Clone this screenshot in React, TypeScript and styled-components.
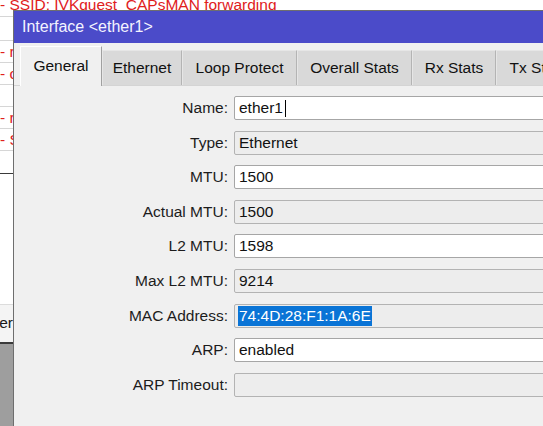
import React from "react";
import styled, { createGlobalStyle } from "styled-components";

const GlobalStyle = createGlobalStyle`
  html, body {
    margin: 0;
    padding: 0;
    overflow: hidden;
    background: #ffffff;
    font-family: "Liberation Sans", Arial, sans-serif;
  }
`;

const Desktop = styled.div`
  position: relative;
  width: 543px;
  height: 426px;
  overflow: hidden;
  background: #ffffff;
`;

const BackList = styled.div`
  display: flex;
  flex-direction: column;
  width: 100%;
  height: 100%;
`;

const BackRow = styled.div<{ h: number; top?: number; line?: string }>`
  flex: none;
  height: ${(p) => p.h}px;
  line-height: ${(p) => p.h}px;
  margin-top: ${(p) => p.top ?? 0}px;
  border-bottom: 1px solid ${(p) => p.line ?? "#d6d6d6"};
  color: #e0201c;
  font-size: 15.5px;
  white-space: nowrap;
  overflow: hidden;
`;

const BackButton = styled.div`
  flex: none;
  width: 13px;
  height: 37px;
  line-height: 36px;
  font-size: 15.5px;
  color: #1a1a1a;
  background: #f4f4f4;
  border-top: 1px solid #dcdcdc;
  white-space: nowrap;
  overflow: hidden;
  display: flex;
  justify-content: flex-end;
`;

const BackEdge = styled.div`
  flex: none;
  height: 2px;
  background: #3a3a3a;
`;

const BackShade = styled.div`
  flex: 1;
  background: #9e9e9e;
`;

const BackBlank = styled.div<{ h: number }>`
  flex: none;
  height: ${(p) => p.h}px;
`;

const Window = styled.div`
  position: absolute;
  left: 13px;
  top: 10px;
  width: 640px;
  height: 440px;
  border: 1px solid #6e6e6e;
  background: #f0f0f0;
  display: flex;
  flex-direction: column;
`;

const TitleBar = styled.div`
  height: 32px;
  background: #4b4bc9;
  color: #f4f4ff;
  font-size: 16px;
  display: flex;
  align-items: center;
  padding-left: 8px;
`;

const TabStrip = styled.div`
  display: flex;
  align-items: flex-end;
  height: 42px;
  padding-left: 6px;
  border-bottom: 1px solid #d4d4d4;
`;

const Tab = styled.div<{ w: number; active?: boolean }>`
  flex: none;
  width: ${(p) => p.w}px;
  box-sizing: border-box;
  height: ${(p) => (p.active ? 40 : 35)}px;
  margin-bottom: ${(p) => (p.active ? -1 : 0)}px;
  background: ${(p) => (p.active ? "#f0f0f0" : "#d9d9d9")};
  border-top: 1px solid ${(p) => (p.active ? "#ffffff" : "#e6e6e6")};
  border-left: 1px solid ${(p) => (p.active ? "#ffffff" : "#e6e6e6")};
  border-right: 1px solid ${(p) => (p.active ? "#a0a0a0" : "#b4b4b4")};
  display: flex;
  align-items: center;
  justify-content: center;
  font-size: 15.5px;
  color: #111;
  padding-bottom: ${(p) => (p.active ? 2 : 0)}px;
`;

const Panel = styled.div`
  flex: 1;
  padding: 10px 0 0 0;
`;

const Form = styled.div`
  display: grid;
  grid-template-columns: 214px 1fr;
  grid-auto-rows: 24px;
  column-gap: 6px;
  row-gap: 10.6px;
`;

const Label = styled.div`
  text-align: right;
  font-size: 15.5px;
  line-height: 24px;
  color: #1c1c1c;
  white-space: nowrap;
`;

const Field = styled.div<{ readOnly?: boolean }>`
  box-sizing: border-box;
  height: 24px;
  border: 1px solid ${(p) => (p.readOnly ? "#b3b3b3" : "#a6a6a6")};
  border-radius: 2px;
  background: ${(p) => (p.readOnly ? "#ededed" : "#ffffff")};
  font-size: 15.5px;
  line-height: 22px;
  color: #111;
  padding-left: 4px;
  display: flex;
  align-items: center;
  white-space: nowrap;
`;

const Caret = styled.span`
  display: inline-block;
  width: 1px;
  height: 17px;
  background: #000;
  margin-left: 2px;
`;

const Selected = styled.span`
  background: #0a74d6;
  color: #ffffff;
  line-height: 20px;
  padding-right: 1px;
  margin-left: -1px;
  padding-left: 1px;
`;

const tabs = [
  { label: "General", w: 82 },
  { label: "Ethernet", w: 80 },
  { label: "Loop Protect", w: 115 },
  { label: "Overall Stats", w: 115 },
  { label: "Rx Stats", w: 84 },
  { label: "Tx Stats", w: 84 },
];

type Row = { label: string; value?: React.ReactNode; readOnly?: boolean };

const rows: Row[] = [
  {
    label: "Name:",
    value: (
      <>
        ether1
        <Caret />
      </>
    ),
  },
  { label: "Type:", value: "Ethernet", readOnly: true },
  { label: "MTU:", value: "1500" },
  { label: "Actual MTU:", value: "1500", readOnly: true },
  { label: "L2 MTU:", value: "1598" },
  { label: "Max L2 MTU:", value: "9214", readOnly: true },
  {
    label: "MAC Address:",
    value: <Selected>74:4D:28:F1:1A:6E</Selected>,
    readOnly: true,
  },
  { label: "ARP:", value: "enabled" },
  { label: "ARP Timeout:", readOnly: true },
];

export default function App() {
  return (
    <>
      <GlobalStyle />
      <Desktop>
        <BackList>
          <BackRow h={23} top={-7}>- SSID: IVKguest&nbsp; CAPsMAN forwarding</BackRow>
          <BackRow h={23}></BackRow>
          <BackRow h={21}>- r</BackRow>
          <BackRow h={21}>- c</BackRow>
          <BackRow h={21}></BackRow>
          <BackRow h={21}>- r</BackRow>
          <BackRow h={21}>- S</BackRow>
          <BackRow h={22} line="#3a3a3a"></BackRow>
          <BackBlank h={130} />
          <BackButton>er</BackButton>
          <BackEdge />
          <BackShade />
        </BackList>

        <Window>
          <TitleBar>Interface &lt;ether1&gt;</TitleBar>
          <TabStrip>
            {tabs.map((t, i) => (
              <Tab key={t.label} w={t.w} active={i === 0}>
                {t.label}
              </Tab>
            ))}
          </TabStrip>
          <Panel>
            <Form>
              {rows.map((r) => (
                <React.Fragment key={r.label}>
                  <Label>{r.label}</Label>
                  <Field readOnly={r.readOnly}>{r.value}</Field>
                </React.Fragment>
              ))}
            </Form>
          </Panel>
        </Window>
      </Desktop>
    </>
  );
}
